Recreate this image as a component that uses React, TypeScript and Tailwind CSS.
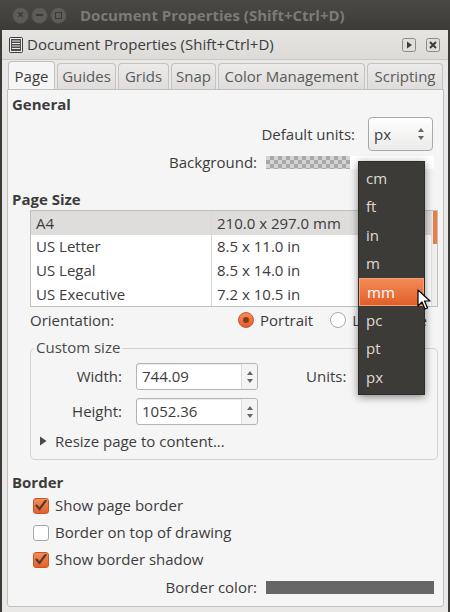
import type { ReactNode } from "react";

const FONT = "font-['Open_Sans','Noto_Sans',sans-serif]";

function WinButton({ glyph }: { glyph: ReactNode }) {
  return (
    <div className="w-[17px] h-[17px] rounded-full bg-[#5d5c57] border border-[#4a4945] flex items-center justify-center text-[#3a3935]">
      {glyph}
    </div>
  );
}

function SpinArrows() {
  return (
    <svg width="8" height="14" viewBox="0 0 8 14" className="text-[#666]">
      <path d="M4 1 L7 5 L1 5 Z" fill="currentColor" />
      <path d="M4 13 L7 9 L1 9 Z" fill="currentColor" />
    </svg>
  );
}

function SpinEntry({ value }: { value: string }) {
  return (
    <div className="w-[122px] h-[27px] flex bg-white border border-[#b4b4b0] rounded-[3px] shadow-[inset_0_1px_1px_rgba(0,0,0,0.08)]">
      <div className="flex-1 flex items-center pl-[5px] text-[15px] text-[#3c3c3c]">{value}</div>
      <div className="w-[16px] border-l border-[#dcdcdc] bg-[#f4f4f4] flex items-center justify-center rounded-r-[3px]">
        <SpinArrows />
      </div>
    </div>
  );
}

function Check({ on }: { on: boolean }) {
  return on ? (
    <div className="w-[16px] h-[16px] rounded-[3px] bg-gradient-to-b from-[#f58c5a] to-[#e0622c] border border-[#c4562a] flex items-center justify-center">
      <svg width="12" height="11" viewBox="0 0 12 11">
        <path d="M1.5 5.5 L4.5 9 L10.5 1" stroke="#5a3a2a" strokeWidth="2.2" fill="none" strokeLinecap="round" />
      </svg>
    </div>
  ) : (
    <div className="w-[16px] h-[16px] rounded-[3px] bg-white border border-[#a8a8a4]" />
  );
}

function CheckRow({ on, label }: { on: boolean; label: string }) {
  return (
    <div className="h-[27px] flex items-center pl-[21px] gap-[6px] text-[15px] text-[#3c3c3c]">
      <Check on={on} />
      <span>{label}</span>
    </div>
  );
}

const sizes = [
  ["A4", "210.0 x 297.0 mm"],
  ["US Letter", "8.5 x 11.0 in"],
  ["US Legal", "8.5 x 14.0 in"],
  ["US Executive", "7.2 x 10.5 in"],
];

const units = ["cm", "ft", "in", "m", "mm", "pc", "pt", "px"];

const tabs = [
  { t: "Guides", w: "w-[59px]" },
  { t: "Grids", w: "w-[51px]" },
  { t: "Snap", w: "w-[45px]" },
  { t: "Color Management", w: "w-[147px]" },
  { t: "Scripting", w: "w-[76px]" },
];

export default function App() {
  return (
    <div className={`relative w-[450px] h-[612px] overflow-hidden bg-[#3c3b37] flex flex-col ${FONT}`}>
      {/* title bar */}
      <div className="h-[30px] shrink-0 flex items-center bg-gradient-to-b from-[#4a4945] to-[#3c3b37]">
        <div className="flex items-center gap-[2px] pl-[12px]">
          <WinButton glyph={<span className="text-[12px] leading-none font-bold">×</span>} />
          <WinButton glyph={<span className="w-[7px] h-[2px] bg-[#3a3935]" />} />
          <WinButton glyph={<span className="w-[7px] h-[7px] border-[1.5px] border-[#3a3935]" />} />
        </div>
        <div className="ml-[13px] text-[15px] font-bold text-[#7c7b76] whitespace-nowrap">Document Properties (Shift+Ctrl+D)</div>
      </div>

      {/* window body */}
      <div className="flex-1 flex flex-col bg-[#e9e8e6] ml-[2px] mr-[2px]">
        {/* dock header */}
        <div className="h-[30px] shrink-0 flex items-center pl-[6px] pr-[8px] bg-gradient-to-b from-[#e6e5e2] to-[#dcdbd7] border-b border-[#c8c7c3]">
          <svg width="16" height="16" viewBox="0 0 16 16" className="shrink-0">
            <rect x="1.5" y="0.5" width="13" height="15" rx="1" fill="#f0f0f0" stroke="#3a3a3a" />
            <rect x="3" y="2" width="10" height="12" fill="#4a4a4a" />
            <path d="M4 4h8M4 6.5h8M4 9h8M4 11.5h8" stroke="#e8e8e8" strokeWidth="1" />
          </svg>
          <div className="ml-[3px] text-[15px] text-[#3c3c3c] flex-1 whitespace-nowrap">Document Properties (Shift+Ctrl+D)</div>
          <svg width="14" height="14" viewBox="0 0 14 14" className="mr-[10px]">
            <rect x="0.5" y="0.5" width="13" height="13" rx="2" fill="#e0dfdb" stroke="#8a8a86" />
            <path d="M5 3.5 L10 7 L5 10.5 Z" fill="#3c3c3c" />
          </svg>
          <svg width="14" height="14" viewBox="0 0 14 14">
            <rect x="0.5" y="0.5" width="13" height="13" rx="2" fill="#e0dfdb" stroke="#8a8a86" />
            <path d="M4 4 L10 10 M10 4 L4 10" stroke="#3c3c3c" strokeWidth="2" />
          </svg>
        </div>

        {/* notebook */}
        <div className="flex-1 flex flex-col pl-[5px] pr-[4px] pt-[1px] pb-[5px]">
          <div className="h-[28px] shrink-0 flex items-end pl-[1px] gap-[2px] relative z-10 overflow-hidden">
            <div className="w-[47px] h-[29px] shrink-0 flex items-center justify-center bg-[#f5f5f5] border border-b-0 border-[#c0c0bc] rounded-t-[4px] text-[15px] text-[#3c3c3c] -mb-[1px] whitespace-nowrap">
              Page
            </div>
            {tabs.map(({ t, w }) => (
              <div
                key={t}
                className={`${w} h-[26px] shrink-0 flex items-center justify-center bg-gradient-to-b from-[#ecebe9] to-[#dedddb] border border-b-0 border-[#c4c3bf] rounded-t-[4px] text-[15px] text-[#5a5a5a] whitespace-nowrap`}
              >
                {t}
              </div>
            ))}
          </div>
          <div className="flex-1 flex flex-col bg-[#f5f5f5] border border-[#c0c0bc] rounded-b-[3px] pl-[4px] pr-[5px] pt-[5px]">
            <div className="h-[19px] flex items-center text-[15px] font-bold text-[#3c3c3c]">General</div>
            <div className="h-[36px] mt-[2px] flex items-center justify-end text-[15px] text-[#3c3c3c]">
              <span className="mr-[13px]">Default units:</span>
              <div className="w-[65px] h-[34px] mr-[5px] flex items-center justify-between pl-[5px] pr-[7px] rounded-[4px] border border-[#a8a8a4] bg-gradient-to-b from-[#ffffff] to-[#ebebea]">
                <span>px</span>
                <SpinArrows />
              </div>
            </div>
            <div className="h-[22px] -mt-[1px] flex items-center text-[15px] text-[#3c3c3c]">
              <span className="w-[245px] text-right">Background:</span>
              <div className="ml-[9px] w-[168px] h-[13px] flex">
                <div className="w-[84px] h-full bg-[length:8px_8px] bg-[linear-gradient(45deg,#a8a8a8_25%,transparent_25%,transparent_75%,#a8a8a8_75%),linear-gradient(45deg,#a8a8a8_25%,#d4d4d4_25%,#d4d4d4_75%,#a8a8a8_75%)] bg-[position:0_0,4px_4px]" />
                <div className="flex-1 h-full bg-white" />
              </div>
            </div>
            <div className="h-[19px] mt-[17px] flex items-center text-[15px] font-bold text-[#3c3c3c]">Page Size</div>

            {/* size table */}
            <div className="ml-[18px] mt-[1px] h-[97px] flex bg-white border border-[#c0c0bc]">
              <div className="flex-1 flex flex-col">
                {sizes.map(([n, s], i) => (
                  <div
                    key={n}
                    className={`h-[24px] flex text-[15px] text-[#3c3c3c] ${i === 0 ? "bg-[#dedddb]" : ""}`}
                  >
                    <div className="w-[181px] pl-[5px] flex items-center border-r border-[#d8d8d8]">{n}</div>
                    <div className="flex-1 pl-[5px] flex items-center">{s}</div>
                  </div>
                ))}
              </div>
              <div className="w-[6px] bg-[#f0f0ef] border-l border-[#e0e0e0]">
                <div className="h-[33px] w-[4px] ml-[1px] bg-[#ee7a45]" />
              </div>
            </div>

            {/* orientation */}
            <div className="h-[22px] mt-[2px] flex items-center text-[15px] text-[#3c3c3c] pl-[18px] whitespace-nowrap">
              <span className="w-[208px] shrink-0">Orientation:</span>
              <div className="w-[16px] h-[16px] shrink-0 rounded-full bg-gradient-to-b from-[#f58c5a] to-[#df5f2a] border border-[#c4562a] flex items-center justify-center">
                <div className="w-[6px] h-[6px] rounded-full bg-[#8a3a1a]" />
              </div>
              <span className="ml-[6px]">Portrait</span>
              <div className="ml-[17px] w-[16px] h-[16px] shrink-0 rounded-full bg-white border border-[#a8a8a4]" />
              <span className="ml-[6px]">Landscape</span>
            </div>

            {/* custom size frame */}
            <div className="relative ml-[18px] mt-[17px] h-[112px] border border-[#d2d2ce] rounded-[5px] flex flex-col">
              <div className="absolute left-[3px] -top-[12px] px-[2px] bg-[#f5f5f5] text-[15px] text-[#4a4a4a] leading-[20px]">
                Custom size
              </div>
              <div className="mt-[14px] h-[27px] flex items-center text-[15px] text-[#3c3c3c]">
                <span className="w-[91px] text-right">Width:</span>
                <div className="ml-[14px]"><SpinEntry value="744.09" /></div>
                <span className="ml-[48px]">Units:</span>
              </div>
              <div className="mt-[8px] h-[27px] flex items-center text-[15px] text-[#3c3c3c]">
                <span className="w-[91px] text-right">Height:</span>
                <div className="ml-[14px]"><SpinEntry value="1052.36" /></div>
              </div>
              <div className="mt-[5px] h-[22px] flex items-center text-[15px] text-[#3c3c3c] pl-[8px]">
                <svg width="8" height="10" viewBox="0 0 8 10" className="mr-[8px]">
                  <path d="M1 0.5 L7.5 5 L1 9.5 Z" fill="#4a4a4a" />
                </svg>
                Resize page to content...
              </div>
            </div>

            <div className="h-[19px] mt-[13px] flex items-center text-[15px] font-bold text-[#3c3c3c]">Border</div>
            <div className="mt-[0px]">
              <CheckRow on label="Show page border" />
              <CheckRow on={false} label="Border on top of drawing" />
              <CheckRow on label="Show border shadow" />
            </div>
            <div className="h-[22px] mt-[3px] flex items-center text-[15px] text-[#3c3c3c]">
              <span className="w-[245px] text-right">Border color:</span>
              <div className="ml-[9px] w-[168px] h-[13px] bg-[#666666]" />
            </div>
          </div>
        </div>
      </div>

      {/* units dropdown menu */}
      <div className="absolute left-[358px] top-[161px] w-[67px] h-[234px] bg-[#3c3b37] pt-[2px] shadow-[0_2px_8px_rgba(0,0,0,0.45)] border border-[#2e2d2a]">
        {units.map((u) => (
          <div
            key={u}
            className={`h-[28.4px] flex items-center pl-[7px] text-[15px] ${
              u === "mm"
                ? "bg-gradient-to-b from-[#f48a55] to-[#e0602a] border border-[#f5a07a] text-white"
                : "text-[#dfdbd2]"
            }`}
          >
            {u}
          </div>
        ))}
      </div>

      {/* mouse cursor */}
      <svg className="absolute left-[417px] top-[289px]" width="14" height="22" viewBox="0 0 14 22">
        <path d="M1 1 L1 17 L5 13 L8 20 L10.5 19 L7.5 12 L13 12 Z" fill="#ffffff" stroke="#000000" strokeWidth="1.2" strokeLinejoin="round" />
      </svg>
    </div>
  );
}
